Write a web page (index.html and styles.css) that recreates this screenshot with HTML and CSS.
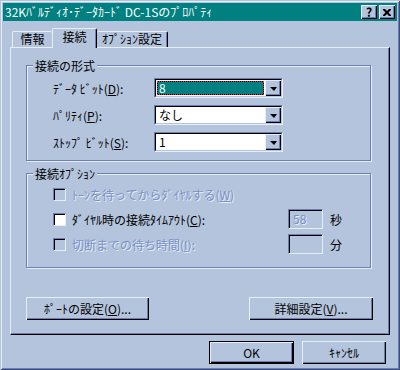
FILE: index.html
```html
<!DOCTYPE html>
<html lang="ja">
<head>
  <meta charset="UTF-8">
  <title>32Kﾊﾞﾙﾃﾞｨｵ･ﾃﾞｰﾀｶｰﾄﾞ DC-1Sのﾌﾟﾛﾊﾟﾃｨ</title>
  <link rel="stylesheet" href="styles.css">
</head>
<body>
  <div class="window">
    <div class="titlebar">
      <span class="title">32Kﾊﾞﾙﾃﾞｨｵ･ﾃﾞｰﾀｶｰﾄﾞ DC-1Sのﾌﾟﾛﾊﾟﾃｨ</span>
      <span class="tbtn">?</span>
      <span class="tbtn">
        <svg width="8" height="7" viewBox="0 0 8 7"><path d="M0 0h2l2 2 2-2h2v1l-2.5 2.5L8 6v1H6L4 5 2 7H0V6l2.5-2.5L0 1z" fill="#000"/></svg>
      </span>
    </div>

    <div class="tabs">
      <div class="tab first">情報</div>
      <div class="tab active">接続</div>
      <div class="tab last">ｵﾌﾟｼｮﾝ設定</div>
    </div>

    <div class="panel">
      <div class="group">
        <div class="group-title">接続の形式</div>
        <div class="rows">
          <div class="row">
            <span class="label">ﾃﾞｰﾀ ﾋﾞｯﾄ(<u>D</u>):</span>
            <div class="combo">
              <div class="combo-inner">
                <span class="value focus">8</span>
                <span class="drop"><i class="arrow"></i></span>
              </div>
            </div>
          </div>
          <div class="row">
            <span class="label">ﾊﾟﾘﾃｨ(<u>P</u>):</span>
            <div class="combo">
              <div class="combo-inner">
                <span class="value">なし</span>
                <span class="drop"><i class="arrow"></i></span>
              </div>
            </div>
          </div>
          <div class="row">
            <span class="label">ｽﾄｯﾌﾟ ﾋﾞｯﾄ(<u>S</u>):</span>
            <div class="combo">
              <div class="combo-inner">
                <span class="value">1</span>
                <span class="drop"><i class="arrow"></i></span>
              </div>
            </div>
          </div>
        </div>
      </div>

      <div class="group options">
        <div class="group-title">接続ｵﾌﾟｼｮﾝ</div>
        <div class="rows checks">
          <div class="row disabled">
            <span class="check"></span>
            <span class="text">ﾄｰﾝを待ってからﾀﾞｲﾔﾙする(<u>W</u>)</span>
          </div>
          <div class="row">
            <span class="check on"></span>
            <span class="text">ﾀﾞｲﾔﾙ時の接続ﾀｲﾑｱｳﾄ(<u>C</u>):</span>
            <span class="edit disabled">58</span>
            <span class="unit">秒</span>
          </div>
          <div class="row disabled">
            <span class="check"></span>
            <span class="text">切断までの待ち時間(<u>I</u>):</span>
            <span class="edit"></span>
            <span class="unit enabled">分</span>
          </div>
        </div>
      </div>

      <div class="panel-buttons">
        <button class="btn port">ﾎﾟｰﾄの設定(<u>O</u>)...</button>
        <button class="btn advanced">詳細設定(<u>V</u>)...</button>
      </div>
    </div>

    <div class="footer">
      <button class="btn ok">OK</button>
      <button class="btn cancel">ｷｬﾝｾﾙ</button>
    </div>
  </div>
</body>
</html>
```

FILE: styles.css
```css
body { margin: 0; background: #b4c4dc; font-family: "Noto Sans CJK JP", "DejaVu Sans", sans-serif; font-size: 12px; color: #000; }
u { text-decoration: underline; text-underline-offset: 1px; }

.window { width: 400px; height: 370px; box-sizing: border-box; background: #b4c4dc; box-shadow: inset 1px 1px #b4c4dc, inset -1px -1px #3c4c78, inset 2px 2px #e6eef8, inset -2px -2px #6a80b4; overflow: hidden; }

.titlebar { height: 18px; margin: 3px 3px 0 3px; background: #008080; color: #fff; display: flex; align-items: center; padding: 0 2px; }
.title { flex: 1; line-height: 14px; white-space: nowrap; }
.tbtn { width: 16px; height: 14px; box-sizing: border-box; margin-left: 2px; background: #b4c4dc; color: #000; display: flex; align-items: center; justify-content: center; font-weight: bold; font-size: 12px; line-height: 12px; box-shadow: inset 1px 1px #e6eef8, inset -1px -1px #000, inset -2px -2px #6a80b4; }

.tabs { display: flex; align-items: flex-end; height: 19px; margin: 7px 0 0 12px; }
.tab { box-sizing: border-box; height: 16px; line-height: 14px; text-align: center; background: #b4c4dc; border-top: 1px solid #e6eef8; border-left: 1px solid #e6eef8; border-right: 1px solid #000; box-shadow: inset -1px 0 #6a80b4; border-radius: 2px 2px 0 0; }
.tab.first { width: 40px; border-right: none; box-shadow: none; }
.tab.active { width: 45px; height: 20px; padding-top: 1px; margin-bottom: -1px; position: relative; z-index: 1; }
.tab.last { width: 71px; border-left: none; }

.panel { height: 288px; margin: 0 10px; box-sizing: border-box; border-top: 1px solid #e6eef8; border-left: 1px solid #e6eef8; border-right: 1px solid #000; border-bottom: 1px solid #000; box-shadow: inset -1px -1px #6a80b4; padding: 0 18px 0 15px; }

.group { margin-top: 17px; border: 1px solid #6a80b4; box-shadow: inset 1px 1px #e6eef8, 1px 1px #e6eef8; padding: 0 0 8px 26px; }
.group-title { margin: -6px 0 0 6px; padding: 0 2px; width: fit-content; line-height: 12px; background: #b4c4dc; margin-left: -20px; }
.rows { display: flex; flex-direction: column; gap: 7px; margin-top: 6px; }
.row { display: flex; align-items: center; height: 20px; }
.label { width: 101px; white-space: nowrap; }

.combo { width: 129px; height: 20px; box-sizing: border-box; border: 1px solid; border-color: #6a80b4 #e6eef8 #e6eef8 #6a80b4; }
.combo-inner { height: 100%; box-sizing: border-box; display: flex; border: 1px solid; border-color: #000 #b4c4dc #b4c4dc #000; background: #fff; }
.value { flex: 1; margin: 1px; padding-left: 2px; line-height: 14px; }
.value.focus { background: #008080; color: #fff; box-shadow: inset 0 0 0 1px #000; outline: 1px dotted #ff2a2a; outline-offset: -1px; }
.drop { width: 16px; box-sizing: border-box; background: #b4c4dc; display: flex; align-items: center; justify-content: center; box-shadow: inset 1px 1px #e6eef8, inset -1px -1px #000, inset -2px -2px #6a80b4; }
.arrow { width: 0; height: 0; border-left: 4px solid transparent; border-right: 3px solid transparent; border-top: 4px solid #000; margin-top: 1px; }

.group.options { margin-top: 12px; padding: 0 28px 13px 26px; }
.checks { gap: 5px; margin-top: 4px; }
.check { width: 13px; height: 13px; box-sizing: border-box; border: 1px solid; border-color: #6a80b4 #e6eef8 #e6eef8 #6a80b4; box-shadow: inset 1px 1px #000; background: #b4c4dc; margin-right: 6px; }
.check.on { background: #fff; }
.text { white-space: nowrap; }
.disabled .text, .edit.disabled { color: #7890c8; text-shadow: 1px 1px #e6eef8; }
.edit { margin-left: auto; width: 35px; height: 20px; box-sizing: border-box; border: 1px solid; border-color: #6a80b4 #e6eef8 #e6eef8 #6a80b4; box-shadow: inset 1px 1px #000; background: #b4c4dc; padding: 2px 0 0 4px; line-height: 14px; }
.unit { width: 12px; margin-left: 7px; }

.panel-buttons { display: flex; justify-content: space-between; margin: 29px -2px 0 0; }
.btn { height: 23px; box-sizing: border-box; border: none; background: #b4c4dc; font: inherit; color: #000; padding: 0; box-shadow: inset 1px 1px #e6eef8, inset -1px -1px #000, inset -2px -2px #6a80b4; }
.btn.port { width: 123px; }
.btn.advanced { width: 124px; }

.footer { display: flex; justify-content: flex-end; gap: 8px; margin-top: 6px; padding-right: 14px; }
.btn.ok { width: 85px; box-shadow: inset 0 0 0 1px #000, inset 2px 2px #e6eef8, inset -2px -2px #000, inset -3px -3px #6a80b4; }
.btn.cancel { width: 84px; }
```
